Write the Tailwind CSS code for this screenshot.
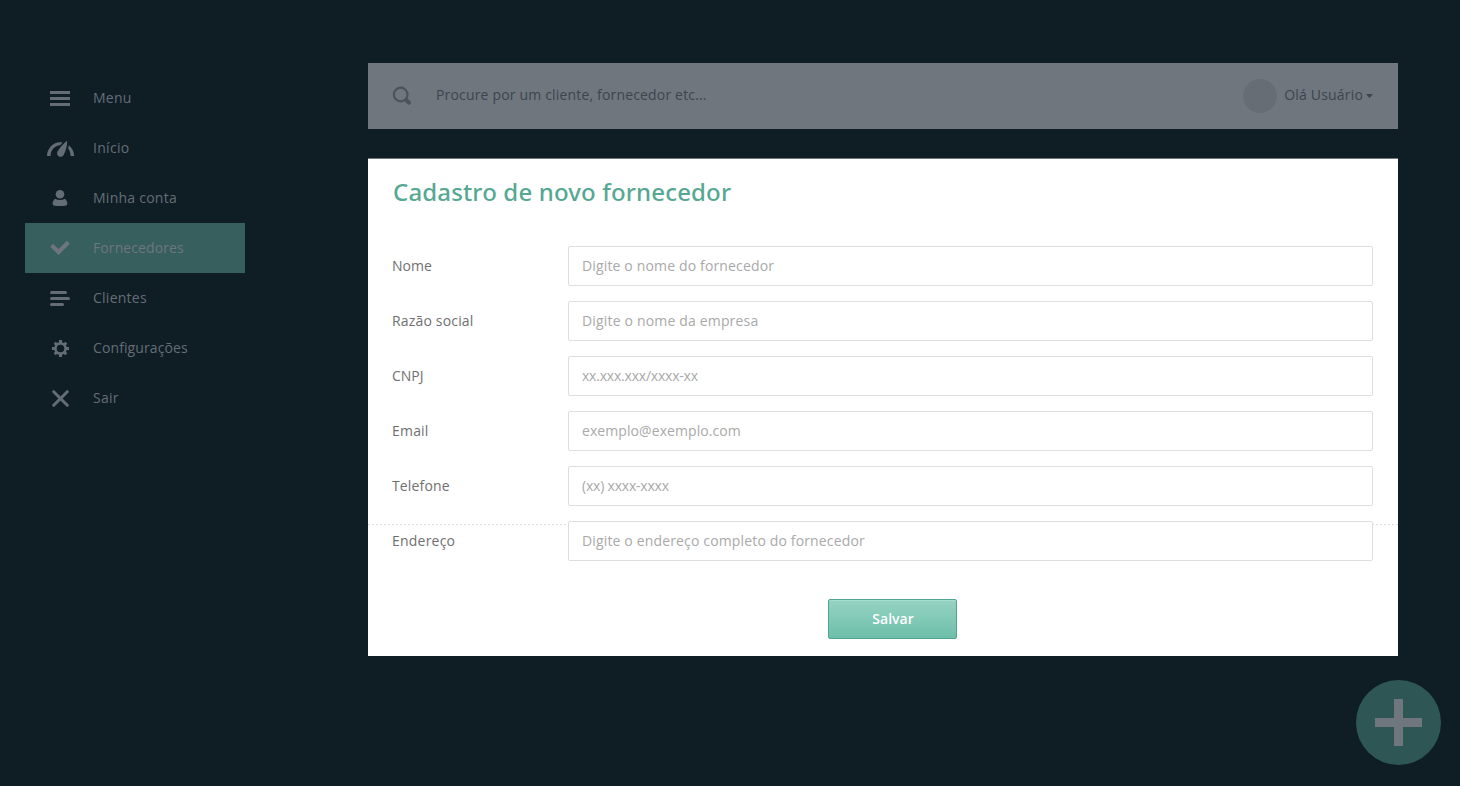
<!DOCTYPE html>
<html lang="pt-BR">
<head>
<meta charset="utf-8">
<title>Cadastro de novo fornecedor</title>
<script src="https://cdn.jsdelivr.net/npm/@tailwindcss/browser@4"></script>
</head>
<body class="h-[786px] overflow-hidden bg-[#0f1d25] font-['Open_Sans','Noto_Sans',sans-serif] text-sm">
<div class="flex h-[786px]">
  <nav class="ml-[25px] mt-[73px] w-[220px] shrink-0 text-[#646d76]">
    <a class="flex h-[50px] items-center"><svg class="ml-[20px] mr-[13px] size-[35px]" viewBox="0 0 35 35" fill="currentColor"><path d="M5 10h20v3H5zM5 16h20v3H5zM5 22h20v3H5z"/></svg><span class="tracking-[.25px]">Menu</span></a>
    <a class="flex h-[50px] items-center"><svg class="ml-[20px] mr-[13px] size-[35px]" viewBox="0 0 35 35" fill="currentColor"><path d="M2 25C2 17.500 8 11.200 15 11.200c1 0 1.700.1 2.500.3l-2.300 2.700C9.800 14.400 5.600 19 5.600 25zM22.100 9.700c.3 4-.8 9-3.200 13.700a3.500 3.500 0 1 1-6.200-3.100C15 16 18.500 12.500 22.100 9.700zM23.900 14.200c3.200 2.700 5.200 6.600 5.300 10.800h-3.600c-.2-3.200-.9-5.600-2.500-7.800z"/></svg><span class="tracking-[.3px]">Início</span></a>
    <a class="flex h-[50px] items-center"><svg class="ml-[20px] mr-[13px] size-[35px]" viewBox="0 0 35 35" fill="currentColor"><circle cx="15" cy="13.200" r="4.300"/><path d="M10.200 17.700c3 1.700 6.600 1.700 9.600 0 1.700 1 2.600 3 2.600 5.500-.8 1.600-3 1.900-7.400 1.900s-6.600-.3-7.400-1.900c0-2.500.9-4.500 2.600-5.500z"/></svg><span class="tracking-[.25px]">Minha conta</span></a>
    <a class="flex h-[50px] items-center bg-[#375f5e] text-[#6e757e]"><svg class="ml-[20px] mr-[13px] size-[35px]" viewBox="0 0 35 35" fill="none" stroke="currentColor" stroke-width="4.200"><path d="M6.600 14.300l6.900 6.700L23.400 11.300"/></svg><span class="tracking-[.1px]">Fornecedores</span></a>
    <a class="flex h-[50px] items-center"><svg class="ml-[20px] mr-[13px] size-[35px]" viewBox="0 0 35 35" fill="currentColor"><rect x="5" y="10" width="17" height="3" rx="1.500"/><rect x="5" y="16" width="20" height="3" rx="1.500"/><rect x="5" y="22" width="14" height="3" rx="1.500"/></svg><span class="tracking-[.25px]">Clientes</span></a>
    <a class="flex h-[50px] items-center"><svg class="ml-[20px] mr-[13px] size-[35px]" viewBox="0 0 35 35" fill="none" stroke="currentColor"><circle cx="15.500" cy="17.500" r="5.100" stroke-width="2.600"/><path stroke-width="3" d="M15.500 9v3M15.500 23v3M7 17.500h3M21 17.500h3M9.700 11.700l2 2M19.300 21.300l2 2M21.300 11.700l-2 2M11.700 21.300l-2 2"/></svg><span class="tracking-[.1px]">Configurações</span></a>
    <a class="flex h-[50px] items-center"><svg class="ml-[20px] mr-[13px] size-[35px]" viewBox="0 0 35 35" fill="none" stroke="currentColor" stroke-width="3" stroke-linecap="round"><path d="M8.700 10.700l13.600 13.600M22.300 10.700L8.700 24.300"/></svg><span class="tracking-[.25px]">Sair</span></a>
  </nav>
  <main class="ml-[123px] mt-[63px] w-[1030px] shrink-0">
    <header class="flex h-[66px] items-center bg-[#6f767e] text-[#3d454d]">
      <svg class="ml-[24px] mr-[24px] size-[20px] text-[#4b535b]" viewBox="0 0 20 20" fill="none" stroke="currentColor"><circle cx="8.700" cy="8.500" r="6.800" stroke-width="2.200"/><path stroke-width="4" stroke-linecap="round" d="M14.500 14.300l2.500 2.400"/></svg>
      <span class="-mt-0.5 tracking-[.17px]">Procure por um cliente, fornecedor etc...</span>
      <span class="ml-auto size-[34px] rounded-full bg-[#666d75]"></span>
      <span class="-mt-0.5 ml-[7px] tracking-[.18px]">Olá Usuário</span>
      <svg class="ml-[3px] mr-[25px] h-[4px] w-[7px]" viewBox="0 0 7 4" fill="currentColor"><path d="M0 0h7L3.500 4z"/></svg>
    </header>
    <section class="relative mt-[29px] h-[498px] border-t border-[#6f767e] bg-white pl-[24px] pr-[25px]">
      <div class="absolute left-0 top-[365px] h-px w-full bg-[repeating-linear-gradient(90deg,#dfdfdf_0_2px,transparent_2px_4px)]"></div>
      <h1 class="h-[87px] pl-px pt-[15px] font-['Noto_Sans','Open_Sans',sans-serif] text-2xl/9 font-medium tracking-[.15px] text-[#57a893]">Cadastro de novo fornecedor</h1>
      <form class="relative flex flex-col gap-[15px] text-[#707070]">
        <label class="flex h-10 items-center"><span class="w-[176px]">Nome</span><input class="h-10 grow rounded-xs border border-[#dddee2] bg-white px-[13px] pb-0.5 tracking-[.15px] placeholder:text-[#a9a9a9]" placeholder="Digite o nome do fornecedor"></label>
        <label class="flex h-10 items-center"><span class="w-[176px] tracking-[.17px]">Razão social</span><input class="h-10 grow rounded-xs border border-[#dddee2] bg-white px-[13px] pb-0.5 tracking-[.17px] placeholder:text-[#a9a9a9]" placeholder="Digite o nome da empresa"></label>
        <label class="flex h-10 items-center"><span class="w-[176px]">CNPJ</span><input class="h-10 grow rounded-xs border border-[#dddee2] bg-white px-[13px] pb-0.5 tracking-[-.21px] placeholder:text-[#a9a9a9]" placeholder="xx.xxx.xxx/xxxx-xx"></label>
        <label class="flex h-10 items-center"><span class="w-[176px] tracking-[.2px]">Email</span><input class="h-10 grow rounded-xs border border-[#dddee2] bg-white px-[13px] pb-0.5 tracking-[.08px] placeholder:text-[#a9a9a9]" placeholder="exemplo@exemplo.com"></label>
        <label class="flex h-10 items-center"><span class="w-[176px] tracking-[.15px]">Telefone</span><input class="h-10 grow rounded-xs border border-[#dddee2] bg-white px-[13px] pb-0.5 tracking-[-.2px] placeholder:text-[#a9a9a9]" placeholder="(xx) xxxx-xxxx"></label>
        <label class="flex h-10 items-center"><span class="w-[176px] tracking-[.22px]">Endereço</span><input class="h-10 grow rounded-xs border border-[#dddee2] bg-white px-[13px] pb-0.5 tracking-[.15px] placeholder:text-[#a9a9a9]" placeholder="Digite o endereço completo do fornecedor"></label>
        <button type="button" class="ml-[436px] mt-[23px] h-10 w-[129px] rounded-xs border border-[#50a48f] bg-linear-to-b from-[#96d3c3] to-[#6cbfaa] pl-px font-semibold text-white shadow-[inset_0_1px_0_#a5dccd]">Salvar</button>
      </form>
    </section>
  </main>
</div>
<button class="absolute left-[1356px] top-[680px] grid size-[85px] place-items-center rounded-full bg-[#2d5654]"><svg class="size-[47px]" viewBox="0 0 47 47" fill="#6f767e"><path d="M19 0h9v19h19v9H28v19h-9V28H0v-9h19z"/></svg></button>
</body>
</html>
